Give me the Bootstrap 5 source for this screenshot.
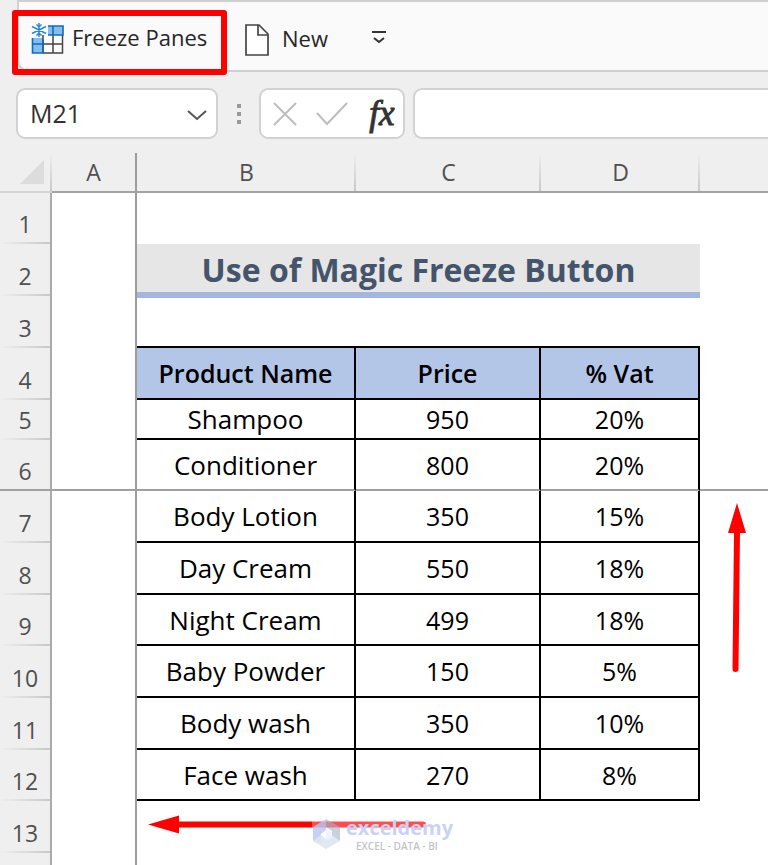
<!DOCTYPE html>
<html lang="en">
<head>
<meta charset="utf-8">
<meta name="viewport" content="width=device-width, initial-scale=1">
<title>Use of Magic Freeze Button</title>
<link href="https://cdn.jsdelivr.net/npm/bootstrap@5.3.0/dist/css/bootstrap.min.css" rel="stylesheet">
<style>
  body { background: #efefef; font-family: "Open Sans", "Noto Sans", sans-serif; color: #262626; overflow-x: hidden; }
  button { font-family: inherit; }
  .quickbar { margin-left: 17px; height: 72px; background: #fafafa; border: 2px solid #d0d0d0; border-right: 0; border-bottom-left-radius: 12px; padding: 17px 0 0 12px; }
  .tool { border: 0; background: none; padding: 0; font-size: 22px; line-height: 32px; color: #262626; }
  .tool-freeze { width: 213px; }
  .tool-new { width: 112px; }
  .callout { position: absolute; inset: -9px 17px -20px -19px; border: 6px solid #f00; border-radius: 3px; pointer-events: none; }
  .formula-row { padding: 16px 0 14px 16px; }
  .field { height: 51px; background: #fff; border: 2px solid #d2d2d2; border-radius: 9px; }
  .name-box { width: 202px; }
  .name-box input { width: 140px; font-size: 25px; color: #333; border: 0; outline: 0; padding: 0 0 0 12px; background: none; }
  .fx-box { width: 146px; padding: 0 5px 0 8px; }
  .plain { border: 0; background: none; padding: 0; line-height: 1; }
  .fx-sign { font-family: "Liberation Serif", serif; font-style: italic; font-size: 35px; line-height: 36px; color: #333; -webkit-text-stroke: 1px #333; width: 32px; }
  .formula-input { border-right: 0; border-radius: 9px 0 0 9px; min-width: 0; }
  .dots { width: 41px; }

  .sheet { table-layout: fixed; border-collapse: separate; border-spacing: 0; background: #fff; }
  .sheet th, .sheet td { padding: 0; overflow: hidden; }
  .w-head { width: 52px; } .w-a { width: 85px; } .w-b { width: 219px; } .w-c { width: 185px; } .w-d { width: 159px; }
  .sheet thead tr { height: 40px; }
  .sheet thead th { background: #efefef linear-gradient(#efefef, #c8c8c8) right / 2px 100% no-repeat; border-bottom: 2px solid #a3a3a3; font-weight: 400; font-size: 23px; line-height: 32px; color: #505050; text-align: center; vertical-align: middle; }
  .sheet thead th:last-child, .sheet thead th.col-a { background: #efefef; }
  .sheet thead th:first-child { border-bottom-color: #d4d4d4; }
  .sheet tbody tr { height: 52px; }
  .sheet tbody tr:first-child, .sheet tbody tr:nth-child(3n+6) { height: 51px; }
  .sheet tbody tr.short-row { height: 40px; }
  .sheet tbody tr.last-row { height: 12px; }
  .sheet tbody th { background: #efefef linear-gradient(90deg, #efefef, #c8c8c8) bottom / 100% 2px no-repeat; border-right: 2px solid #ababab; font-weight: 400; font-size: 23px; line-height: 32px; color: #505050; text-align: center; vertical-align: bottom; padding-bottom: 4px; }
  .sheet tbody .freeze-row th { padding-bottom: 2px; }
  .sheet tbody tr.last-row th { background: #efefef; }
  .sheet thead th.col-a, .sheet .col-a { border-right: 2px solid #9c9c9c; }
  .sheet .cell { border-right: 2px solid #000; border-bottom: 2px solid #000; font-size: 25px; line-height: 32px; text-align: center; vertical-align: middle; color: #000; }
  .sheet .item-name { font-size: 26px; }
  .sheet .title-cell { background: #e6e6e6; border-bottom: 4px solid #a2b6e0; padding-top: 4px; font-weight: 700; font-size: 32px; line-height: 40px; color: #44546a; text-align: center; vertical-align: middle; }
  .sheet .under-title { border-top: 2px solid #a2b6e0; border-bottom: 2px solid #000; }
  .sheet .heading { background: #b4c6e7; font-weight: 600; }
  .sheet .freeze-row > * { border-bottom: 2px solid #a0a0a0; }
  .sheet .freeze-row th { background: #efefef; }
  .arrow-up { position: absolute; left: 727px; top: 350px; }
  .arrow-left { position: absolute; left: 148px; top: 662px; }
  .watermark { position: absolute; left: 312px; top: 663px; background: linear-gradient(rgba(255,255,255,.3), rgba(255,255,255,.3)); width: 146px; }
  .wm-name { font-size: 20px; line-height: 24px; font-weight: 700; color: #c9d2f6; }
  .wm-tag { font-size: 10px; line-height: 12px; font-weight: 600; color: #c4c4c4; padding-left: 10px; }
</style>
<script src="https://cdn.jsdelivr.net/npm/bootstrap@5.3.0/dist/js/bootstrap.bundle.min.js"></script>
</head>
<body>
<header>
  <div class="quickbar d-flex align-items-start">
    <div class="position-relative tool-freeze">
      <button type="button" class="tool d-flex align-items-center text-nowrap">
        <svg class="me-2 mt-1" width="33" height="32" viewBox="0 0 33 32" aria-hidden="true">
          <path d="M17 3h15v9H17z" fill="#83beec"/>
          <path d="M1 15h11v15H1z" fill="#83beec"/>
          <path d="M12 12h20v18H12z" fill="#fff"/>
          <path d="M12 30V12M22 12v18M31.500 12v18H12M12 21h20" fill="none" stroke="#444" stroke-width="1.500"/>
          <path d="M17 3h15v9H17M22 3v9M1.500 15v15H12V17M1 21h11" fill="none" stroke="#0f6cbd" stroke-width="1.600"/>
          <path d="M8 0v14M1 3.500l14 7M15 3.500l-14 7M5.500 1.500L8 4l2.500-2.500M5.500 12.500L8 10l2.500 2.500" fill="none" stroke="#2b88d8" stroke-width="1.500"/>
        </svg>Freeze Panes
      </button>
      <span class="callout"></span>
    </div>
    <button type="button" class="tool tool-new d-flex align-items-center text-nowrap">
      <svg class="mt-1" width="26" height="34" viewBox="0 0 26 34" aria-hidden="true">
        <path d="M2 2h13l9 9v21H2zM14 2v10h10" fill="#fff" stroke="#444" stroke-width="1.700"/>
      </svg><span class="ms-2 ps-1">New</span>
    </button>
    <button type="button" class="tool d-flex align-items-center pt-1 mt-1" aria-label="Customize toolbar">
      <svg width="46" height="22" viewBox="0 0 46 22" aria-hidden="true">
        <path d="M16 5h14M18 11l5 4 5-4" fill="none" stroke="#333" stroke-width="2"/>
      </svg>
    </button>
  </div>
  <div class="formula-row d-flex align-items-center">
    <div class="field name-box d-flex align-items-center justify-content-between">
      <input type="text" value="M21" aria-label="Name box">
      <button type="button" class="plain pe-2" aria-label="Open name list">
        <svg width="22" height="14" viewBox="0 0 22 14" aria-hidden="true"><path d="M2 3l9 8 9-8" fill="none" stroke="#555" stroke-width="2"/></svg>
      </button>
    </div>
    <div class="dots d-flex justify-content-center">
      <svg width="4" height="22" viewBox="0 0 4 22" aria-hidden="true"><path d="M0 1h4v4H0zM0 9h4v4H0zM0 17h4v4H0z" fill="#999"/></svg>
    </div>
    <div class="field fx-box d-flex align-items-center justify-content-between">
      <button type="button" class="plain ps-1" aria-label="Cancel">
        <svg width="24" height="26" viewBox="0 0 24 26" aria-hidden="true"><path d="M1 2l22 22M23 2L1 24" stroke="#bdbdbd" stroke-width="2"/></svg>
      </button>
      <button type="button" class="plain" aria-label="Enter">
        <svg width="32" height="26" viewBox="0 0 32 26" aria-hidden="true"><path d="M1 12l10 11L31 2" fill="none" stroke="#bdbdbd" stroke-width="2"/></svg>
      </button>
      <button type="button" class="plain fx-sign" title="Insert function">fx</button>
    </div>
    <input type="text" class="field formula-input flex-fill ms-2" aria-label="Formula bar">
  </div>
</header>
<main class="position-relative">
  <table class="sheet w-100">
    <colgroup><col class="w-head"><col class="w-a"><col class="w-b"><col class="w-c"><col class="w-d"><col></colgroup>
    <thead>
      <tr>
        <th><svg class="d-block ms-auto me-2" width="24" height="24" viewBox="0 0 24 24" role="img" aria-label="Select all"><path d="M0 24L24 0v24z" fill="#dcdcdc"/></svg></th>
        <th class="col-a">A</th><th>B</th><th>C</th><th>D</th><th></th>
      </tr>
    </thead>
    <tbody>
      <tr><th>1</th><td class="col-a"></td><td></td><td></td><td></td><td></td></tr>
      <tr><th>2</th><td class="col-a"></td><td colspan="3" class="title-cell">Use of Magic Freeze Button</td><td></td></tr>
      <tr><th>3</th><td class="col-a"></td><td colspan="3" class="under-title"></td><td></td></tr>
      <tr><th>4</th><td class="col-a"></td><td class="cell heading">Product Name</td><td class="cell heading">Price</td><td class="cell heading">% Vat</td><td></td></tr>
      <tr class="short-row"><th>5</th><td class="col-a"></td><td class="cell item-name">Shampoo</td><td class="cell">950</td><td class="cell">20%</td><td></td></tr>
      <tr class="freeze-row"><th>6</th><td class="col-a"></td><td class="cell item-name">Conditioner</td><td class="cell">800</td><td class="cell">20%</td><td></td></tr>
      <tr><th>7</th><td class="col-a"></td><td class="cell item-name">Body Lotion</td><td class="cell">350</td><td class="cell">15%</td><td></td></tr>
      <tr><th>8</th><td class="col-a"></td><td class="cell item-name">Day Cream</td><td class="cell">550</td><td class="cell">18%</td><td></td></tr>
      <tr><th>9</th><td class="col-a"></td><td class="cell item-name">Night Cream</td><td class="cell">499</td><td class="cell">18%</td><td></td></tr>
      <tr><th>10</th><td class="col-a"></td><td class="cell item-name">Baby Powder</td><td class="cell">150</td><td class="cell">5%</td><td></td></tr>
      <tr><th>11</th><td class="col-a"></td><td class="cell item-name">Body wash</td><td class="cell">350</td><td class="cell">10%</td><td></td></tr>
      <tr><th>12</th><td class="col-a"></td><td class="cell item-name">Face wash</td><td class="cell">270</td><td class="cell">8%</td><td></td></tr>
      <tr><th>13</th><td class="col-a"></td><td></td><td></td><td></td><td></td></tr>
      <tr class="last-row"><th></th><td class="col-a"></td><td></td><td></td><td></td><td></td></tr>
    </tbody>
  </table>
  <svg class="arrow-up" width="20" height="170" viewBox="0 0 20 170" aria-hidden="true">
    <path d="M10 0l9 30H1z" fill="#f00"/><path d="M10 28L8.500 166" stroke="#f00" stroke-width="6" stroke-linecap="round"/>
  </svg>
  <svg class="arrow-left" width="280" height="20" viewBox="0 0 280 20" aria-hidden="true">
    <path d="M0 9.500L31 0.500v18z" fill="#f00"/><path d="M30 9.500h245" stroke="#f00" stroke-width="6" stroke-linecap="round"/>
  </svg>
  <div class="watermark d-flex align-items-center">
    <svg width="30" height="32" viewBox="0 0 30 32" aria-hidden="true">
      <path d="M1 9L14 1v11l-5 4v9l-8-2z" fill="#b9c5f2" opacity=".8"/>
      <path d="M14 1l14 8v14l-8-5v-5l-6-4z" fill="#a9b0c8" opacity=".6"/>
      <path d="M1 23l8-6 5 4 6-4 8 6-14 8z" fill="#dde7f2" opacity=".9"/>
      <path d="M14 10l6 4v6l-6 3z" fill="#eef2fb" opacity=".9"/>
    </svg>
    <div class="ms-1">
      <div class="wm-name">exceldemy</div>
      <div class="wm-tag text-nowrap">EXCEL - DATA - BI</div>
    </div>
  </div>
</main>
</body>
</html>
